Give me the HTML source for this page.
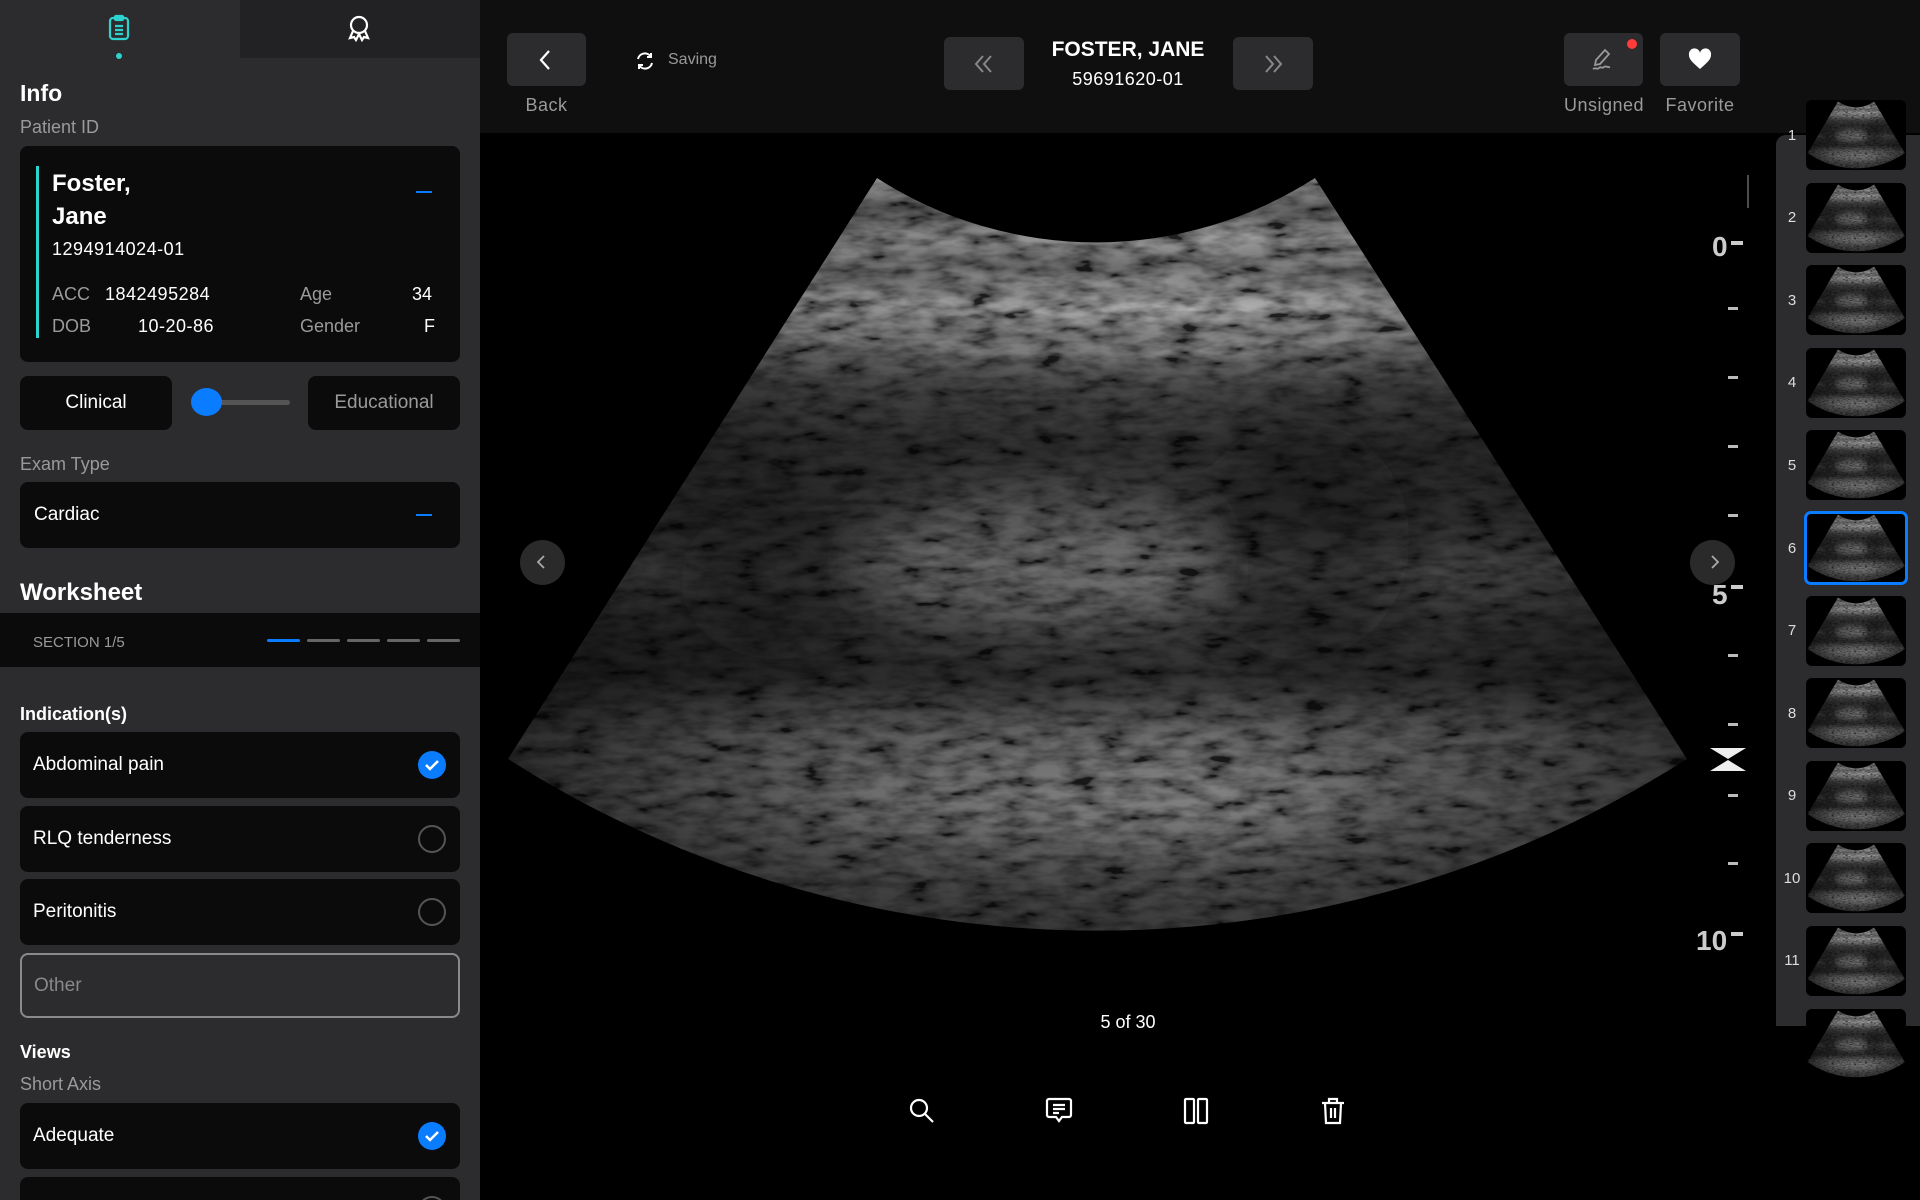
<!DOCTYPE html>
<html><head><meta charset="utf-8"><style>
*{margin:0;padding:0;box-sizing:border-box}
html{overflow:hidden;width:1920px;height:1200px}
body{width:1920px;height:1200px;background:#000;font-family:"Liberation Sans",sans-serif;position:relative;overflow:hidden;color:#fff}
.a{position:absolute}
.side{left:0;top:0;width:480px;height:1200px;background:#2c2c2e}
.card{background:#0b0b0b;border-radius:8px}
.lbl{color:#9a9a9a;font-size:18px}
.opt{left:20px;width:440px;height:66px;background:#0b0b0b;border-radius:8px;font-size:19px;padding-left:13px;line-height:66px}
.rad{position:absolute;right:14px;top:19px;width:28px;height:28px;border-radius:50%;border:2px solid #555}
.chk{position:absolute;right:14px;top:19px;width:28px;height:28px;border-radius:50%;background:#0a7cff}
.chk svg{display:block}
.btn{background:#2c2c2e;border-radius:6px}
.tl{color:#9a9a9a;font-size:18px;text-align:center;letter-spacing:.5px}
.num{color:#ddd;font-size:15px;width:20px;text-align:center}
.th{left:1806px;width:100px;height:70px;background:#000;border-radius:6px;overflow:hidden}
.tick{left:1728px;width:10px;height:3px;background:#bbb}
</style></head><body>
<div class="a side"></div>
<div class="a" style="left:240px;top:0;width:240px;height:58px;background:#222224"></div>
<div class="a" style="left:0;top:0;width:240px;height:60px;background:#2c2c2e;border-top-right-radius:12px"></div>
<svg class="a" style="left:105px;top:14px" width="28" height="28" viewBox="0 0 28 28" fill="none" stroke="#2dd4cf" stroke-width="2.2"><rect x="5" y="4" width="18" height="21" rx="3"/><rect x="10" y="2" width="8" height="4" rx="1"/><path d="M10 12h8M10 16h8M10 20h8"/></svg>
<div class="a" style="left:116px;top:53px;width:6px;height:6px;border-radius:50%;background:#2dd4cf"></div>
<svg class="a" style="left:346px;top:14px" width="26" height="28" viewBox="0 0 26 28" fill="none" stroke="#fff" stroke-width="2.2"><circle cx="13" cy="11" r="8"/><path d="M7 17l-3 7 4-1 2 3 3-6 3 6 2-3 4 1-3-7"/></svg>

<div class="a" style="left:20px;top:80px;font-size:23px;font-weight:bold">Info</div>
<div class="a lbl" style="left:20px;top:117px">Patient ID</div>
<div class="a card" style="left:20px;top:146px;width:440px;height:216px"></div>
<div class="a" style="left:36px;top:166px;width:3px;height:172px;background:#2dd4cf"></div>
<div class="a" style="left:52px;top:167px;font-size:24px;font-weight:bold;line-height:33px">Foster,<br>Jane</div>
<div class="a" style="left:416px;top:191px;width:16px;height:2px;background:#0a7cff"></div>
<div class="a" style="left:52px;top:239px;font-size:18px;letter-spacing:.5px">1294914024-01</div>
<div class="a lbl" style="left:52px;top:284px">ACC</div>
<div class="a" style="left:105px;top:284px;font-size:18px;letter-spacing:.5px">1842495284</div>
<div class="a lbl" style="left:300px;top:284px">Age</div>
<div class="a" style="left:412px;top:284px;font-size:18px">34</div>
<div class="a lbl" style="left:52px;top:316px">DOB</div>
<div class="a" style="left:138px;top:316px;font-size:18px;letter-spacing:.5px">10-20-86</div>
<div class="a lbl" style="left:300px;top:316px">Gender</div>
<div class="a" style="left:424px;top:316px;font-size:18px">F</div>

<div class="a card" style="left:20px;top:376px;width:152px;height:54px;text-align:center;line-height:54px;font-size:19px">Clinical</div>
<div class="a" style="left:206px;top:400px;width:84px;height:5px;border-radius:3px;background:#555"></div>
<div class="a" style="left:191px;top:388px;width:31px;height:28px;border-radius:50%;background:#0a7cff"></div>
<div class="a card" style="left:308px;top:376px;width:152px;height:54px;text-align:center;line-height:54px;font-size:19px;color:#9a9a9a">Educational</div>

<div class="a lbl" style="left:20px;top:454px">Exam Type</div>
<div class="a card" style="left:20px;top:482px;width:440px;height:66px;font-size:19px;line-height:66px;padding-left:14px">Cardiac</div>
<div class="a" style="left:416px;top:514px;width:16px;height:2px;background:#0a7cff"></div>

<div class="a" style="left:20px;top:579px;font-size:24px;font-weight:bold">Worksheet</div>
<div class="a" style="left:0;top:613px;width:480px;height:54px;background:#0b0b0b"></div>
<div class="a" style="left:33px;top:634px;font-size:15px;color:#9a9a9a">SECTION 1/5</div>
<div class="a" style="left:267px;top:639px;width:33px;height:3px;background:#0a7cff;border-radius:2px"></div>
<div class="a" style="left:307px;top:639px;width:33px;height:3px;background:#666;border-radius:2px"></div>
<div class="a" style="left:347px;top:639px;width:33px;height:3px;background:#666;border-radius:2px"></div>
<div class="a" style="left:387px;top:639px;width:33px;height:3px;background:#666;border-radius:2px"></div>
<div class="a" style="left:427px;top:639px;width:33px;height:3px;background:#666;border-radius:2px"></div>

<div class="a" style="left:20px;top:704px;font-size:18px;font-weight:bold">Indication(s)</div>
<div class="a opt" style="top:732px">Abdominal pain<div class="chk"><svg width="28" height="28" viewBox="0 0 28 28"><path d="M8 14l4 4 8-8" stroke="#fff" stroke-width="2.5" fill="none"/></svg></div></div>
<div class="a opt" style="top:806px">RLQ tenderness<div class="rad"></div></div>
<div class="a opt" style="top:879px">Peritonitis<div class="rad"></div></div>
<div class="a opt" style="top:953px;height:65px;background:transparent;border:2px solid #8a8a8a;color:#888;padding-left:12px;line-height:61px">Other</div>
<div class="a" style="left:20px;top:1042px;font-size:18px;font-weight:bold">Views</div>
<div class="a lbl" style="left:20px;top:1074px">Short Axis</div>
<div class="a opt" style="top:1103px">Adequate<div class="chk"><svg width="28" height="28" viewBox="0 0 28 28"><path d="M8 14l4 4 8-8" stroke="#fff" stroke-width="2.5" fill="none"/></svg></div></div>
<div class="a opt" style="top:1177px;height:23px;border-radius:8px 8px 0 0;overflow:hidden"><div class="rad"></div></div>

<!-- top bar -->
<div class="a" style="left:480px;top:0;width:1440px;height:133px;background:#0f0f0f"></div>
<div class="a btn" style="left:507px;top:33px;width:79px;height:53px"></div>
<svg class="a" style="left:535px;top:48px" width="22" height="24" viewBox="0 0 22 24"><path d="M14 3L6 12l8 9" stroke="#fff" stroke-width="2.2" fill="none"/></svg>
<div class="a tl" style="left:507px;top:95px;width:79px">Back</div>
<svg class="a" style="left:634px;top:50px" width="22" height="22" viewBox="0 0 22 22" fill="none" stroke="#fff" stroke-width="2"><path d="M4 9a7 7 0 0 1 13-2M18 13a7 7 0 0 1-13 2"/><path d="M17 3v4h-4M5 19v-4h4"/></svg>
<div class="a" style="left:668px;top:51px;font-size:16px;color:#9a9a9a">Saving</div>
<div class="a btn" style="left:944px;top:37px;width:80px;height:53px"></div>
<svg class="a" style="left:971px;top:53px" width="26" height="22" viewBox="0 0 26 22" fill="none" stroke="#888" stroke-width="2"><path d="M12 3l-7 8 7 8M20 3l-7 8 7 8"/></svg>
<div class="a" style="left:1028px;top:38px;width:200px;text-align:center;font-size:21px;font-weight:bold">FOSTER, JANE</div>
<div class="a" style="left:1028px;top:69px;width:200px;text-align:center;font-size:18px;letter-spacing:.5px">59691620-01</div>
<div class="a btn" style="left:1233px;top:37px;width:80px;height:53px"></div>
<svg class="a" style="left:1260px;top:53px" width="26" height="22" viewBox="0 0 26 22" fill="none" stroke="#888" stroke-width="2"><path d="M6 3l7 8-7 8M14 3l7 8-7 8"/></svg>
<div class="a btn" style="left:1564px;top:33px;width:79px;height:53px"></div>
<svg class="a" style="left:1589px;top:46px" width="28" height="28" viewBox="0 0 28 28" fill="none" stroke="#999" stroke-width="1.8"><path d="M16 4l4 4-9 10-5 1 1-5z"/><path d="M4 23c3-2 4 1 6-1s3 1 5-1 3 1 6 0"/></svg>
<div class="a" style="left:1627px;top:39px;width:10px;height:10px;border-radius:50%;background:#ff3b3b"></div>
<div class="a btn" style="left:1660px;top:33px;width:80px;height:53px"></div>
<svg class="a" style="left:1687px;top:47px" width="26" height="24" viewBox="0 0 26 24"><path d="M13 22C5 15 2 12 2 8a5.5 5.5 0 0 1 11-2 5.5 5.5 0 0 1 11 2c0 4-3 7-11 14z" fill="#fff"/></svg>
<div class="a tl" style="left:1550px;top:95px;width:108px">Unsigned</div>
<div class="a tl" style="left:1650px;top:95px;width:100px">Favorite</div>

<svg class="a" style="left:0;top:0" width="1920" height="1200" viewBox="0 0 1920 1200">
<defs>
<linearGradient id="bg" x1="0" y1="178" x2="0" y2="933" gradientUnits="userSpaceOnUse">
<stop offset="0" stop-color="#b8b8b8"/><stop offset=".04" stop-color="#6a6a6a"/><stop offset=".08" stop-color="#a0a0a0"/><stop offset=".12" stop-color="#707070"/><stop offset=".17" stop-color="#a8a8a8"/><stop offset=".22" stop-color="#7a7a7a"/><stop offset=".28" stop-color="#4a4a4a"/><stop offset=".36" stop-color="#333"/><stop offset=".45" stop-color="#3a3a3a"/><stop offset=".52" stop-color="#5a5a5a"/><stop offset=".6" stop-color="#3a3a3a"/><stop offset=".66" stop-color="#333"/><stop offset=".74" stop-color="#6a6a6a"/><stop offset=".82" stop-color="#707070"/><stop offset=".9" stop-color="#555"/><stop offset="1" stop-color="#3a3a3a"/></linearGradient>
<linearGradient id="hg" x1="508" y1="0" x2="1687" y2="0" gradientUnits="userSpaceOnUse"><stop offset="0" stop-color="#000" stop-opacity=".6"/><stop offset=".25" stop-color="#000" stop-opacity=".15"/><stop offset=".6" stop-color="#000" stop-opacity="0"/><stop offset=".85" stop-color="#000" stop-opacity=".25"/><stop offset="1" stop-color="#000" stop-opacity=".5"/></linearGradient>
<clipPath id="fc"><path d="M877,178 A405,405 0 0,0 1315,178 L1687,759 A1098,1098 0 0,1 508,759 Z"/></clipPath>
<filter id="nz" x="0" y="0" width="100%" height="100%"><feTurbulence type="fractalNoise" baseFrequency="0.03 0.09" numOctaves="3" seed="4"/><feColorMatrix type="matrix" values="2 0 0 0 -0.45  2 0 0 0 -0.45  2 0 0 0 -0.45  0 0 0 0 1"/></filter>
<filter id="bl"><feGaussianBlur stdDeviation="25"/></filter>
<filter id="bl2"><feGaussianBlur stdDeviation="6"/></filter>
<g id="fan">
<g clip-path="url(#fc)">
<rect x="480" y="170" width="1240" height="780" fill="url(#bg)"/>
<g filter="url(#bl)">
<ellipse cx="1040" cy="560" rx="170" ry="70" fill="#8a8a8a" opacity=".55"/>
<ellipse cx="1100" cy="800" rx="280" ry="45" fill="#9a9a9a" opacity=".45"/>
<ellipse cx="780" cy="580" rx="100" ry="80" fill="#111" opacity=".5"/>
<ellipse cx="1300" cy="540" rx="110" ry="120" fill="#111" opacity=".45"/>
</g>
<g filter="url(#bl2)" stroke="#ddd" stroke-width="6" opacity=".5" fill="none">
<path d="M700 230 Q1096 330 1500 230"/><path d="M700 265 Q1096 360 1500 265"/><path d="M650 305 Q1096 400 1550 305"/>
</g>
<rect x="480" y="170" width="1240" height="780" filter="url(#nz)" style="mix-blend-mode:multiply" opacity=".8"/>
<rect x="480" y="170" width="1240" height="780" fill="url(#hg)"/>
</g></g>
</defs>
<use href="#fan"/>
<line x1="1748" y1="175" x2="1748" y2="208" stroke="#666" stroke-width="1.5"/>
<text x="1712" y="256" fill="#ccc" font-size="28" font-weight="bold" font-family="Liberation Sans">0</text>
<text x="1712" y="604" fill="#ccc" font-size="28" font-weight="bold" font-family="Liberation Sans">5</text>
<text x="1696" y="950" fill="#ccc" font-size="28" font-weight="bold" font-family="Liberation Sans">10</text>
<path d="M1710 748h36l-18 11zM1710 771h36l-18-11z" fill="#eee"/>
</svg>
<div class="a" style="left:1731px;top:241px;width:12px;height:4px;background:#ccc"></div>
<div class="a" style="left:1731px;top:585px;width:12px;height:4px;background:#ccc"></div>
<div class="a" style="left:1731px;top:932px;width:12px;height:4px;background:#ccc"></div>
<div class="a tick" style="top:307px"></div><div class="a tick" style="top:376px"></div><div class="a tick" style="top:445px"></div><div class="a tick" style="top:514px"></div>
<div class="a tick" style="top:654px"></div><div class="a tick" style="top:723px"></div><div class="a tick" style="top:794px"></div><div class="a tick" style="top:862px"></div>
<div class="a" style="left:520px;top:540px;width:45px;height:45px;border-radius:50%;background:#2a2a2a"></div>
<svg class="a" style="left:532px;top:552px" width="20" height="20" viewBox="0 0 20 20"><path d="M12 4l-6 6 6 6" stroke="#aaa" stroke-width="1.8" fill="none"/></svg>
<div class="a" style="left:1690px;top:540px;width:45px;height:45px;border-radius:50%;background:#2a2a2a"></div>
<svg class="a" style="left:1704px;top:552px" width="20" height="20" viewBox="0 0 20 20"><path d="M8 4l6 6-6 6" stroke="#aaa" stroke-width="1.8" fill="none"/></svg>

<div class="a" style="left:1028px;top:1012px;width:200px;text-align:center;font-size:18px">5 of 30</div>
<svg class="a" style="left:907px;top:1096px" width="30" height="30" viewBox="0 0 30 30" fill="none" stroke="#fff" stroke-width="2.2"><circle cx="12" cy="12" r="8"/><path d="M18 18l8 8"/></svg>
<svg class="a" style="left:1044px;top:1096px" width="30" height="30" viewBox="0 0 30 30" fill="none" stroke="#fff" stroke-width="2.2"><path d="M5 3h20a2 2 0 0 1 2 2v14a2 2 0 0 1-2 2h-7l-3 4-3-4H5a2 2 0 0 1-2-2V5a2 2 0 0 1 2-2z"/><path d="M9 9h12M9 13h12M9 17h6"/></svg>
<svg class="a" style="left:1181px;top:1096px" width="30" height="30" viewBox="0 0 30 30" fill="none" stroke="#fff" stroke-width="2.2"><rect x="4" y="3" width="9" height="24" rx="1"/><rect x="17" y="3" width="9" height="24" rx="1"/></svg>
<svg class="a" style="left:1318px;top:1096px" width="30" height="30" viewBox="0 0 30 30" fill="none" stroke="#fff" stroke-width="2.2"><path d="M4 7h22M11 7V3h8v4M7 7l1 20h14l1-20M13 12v10M17 12v10"/></svg>

<div class="a" style="left:1776px;top:135px;width:144px;height:891px;background:#2c2c2e;border-top-left-radius:10px"></div>
<div class="a num" style="left:1782px;top:127px">1</div>
<svg class="a th" style="top:100px" viewBox="490 160 1210 790" preserveAspectRatio="none"><use href="#fan"/></svg>
<div class="a num" style="left:1782px;top:209px">2</div>
<svg class="a th" style="top:183px" viewBox="490 160 1210 790" preserveAspectRatio="none"><use href="#fan"/></svg>
<div class="a num" style="left:1782px;top:292px">3</div>
<svg class="a th" style="top:265px" viewBox="490 160 1210 790" preserveAspectRatio="none"><use href="#fan"/></svg>
<div class="a num" style="left:1782px;top:374px">4</div>
<svg class="a th" style="top:348px" viewBox="490 160 1210 790" preserveAspectRatio="none"><use href="#fan"/></svg>
<div class="a num" style="left:1782px;top:457px">5</div>
<svg class="a th" style="top:430px" viewBox="490 160 1210 790" preserveAspectRatio="none"><use href="#fan"/></svg>
<div class="a num" style="left:1782px;top:540px">6</div>
<svg class="a th" style="top:513px" viewBox="490 160 1210 790" preserveAspectRatio="none"><use href="#fan"/></svg>
<div class="a" style="left:1804px;top:511px;width:104px;height:74px;border:3px solid #0a7cff;border-radius:7px"></div>
<div class="a num" style="left:1782px;top:622px">7</div>
<svg class="a th" style="top:596px" viewBox="490 160 1210 790" preserveAspectRatio="none"><use href="#fan"/></svg>
<div class="a num" style="left:1782px;top:705px">8</div>
<svg class="a th" style="top:678px" viewBox="490 160 1210 790" preserveAspectRatio="none"><use href="#fan"/></svg>
<div class="a num" style="left:1782px;top:787px">9</div>
<svg class="a th" style="top:761px" viewBox="490 160 1210 790" preserveAspectRatio="none"><use href="#fan"/></svg>
<div class="a num" style="left:1782px;top:870px">10</div>
<svg class="a th" style="top:843px" viewBox="490 160 1210 790" preserveAspectRatio="none"><use href="#fan"/></svg>
<div class="a num" style="left:1782px;top:952px">11</div>
<svg class="a th" style="top:926px" viewBox="490 160 1210 790" preserveAspectRatio="none"><use href="#fan"/></svg>
<svg class="a th" style="top:1009px" viewBox="490 160 1210 790" preserveAspectRatio="none"><use href="#fan"/></svg>
</body></html>
